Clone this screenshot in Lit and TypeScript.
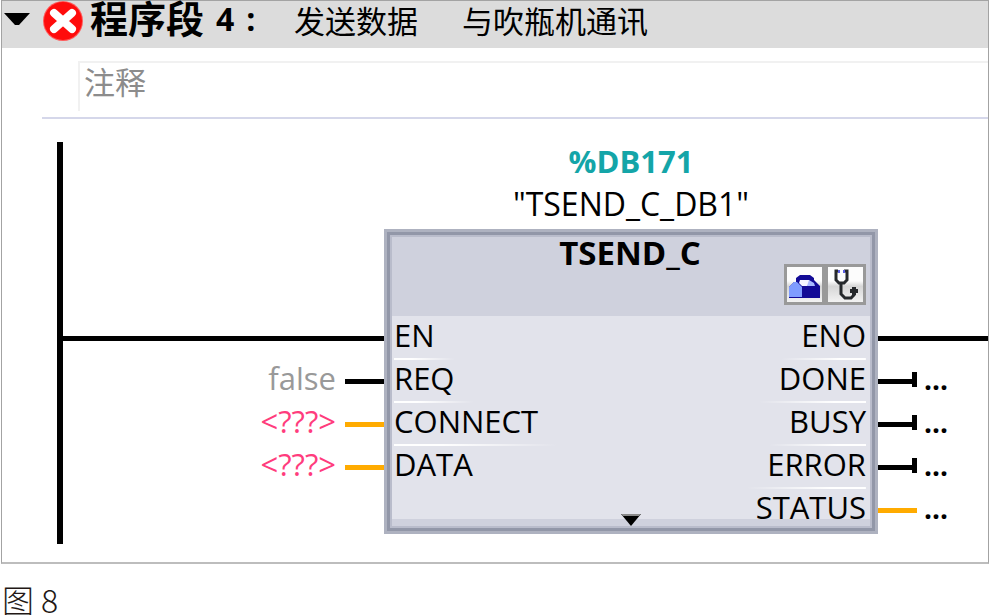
import { LitElement, html, css, svg } from "lit";
import { customElement, property } from "lit/decorators.js";

interface Operand {
  text: string;
  kind: "value" | "missing" | "none";
  wire: "bool" | "data";
}

interface Output {
  name: string;
  wire: "rail" | "bool" | "data";
}

const operands: Operand[] = [
  { text: "false", kind: "value", wire: "bool" },
  { text: "<???>", kind: "missing", wire: "data" },
  { text: "<???>", kind: "missing", wire: "data" },
];

const inputs = ["EN", "REQ", "CONNECT", "DATA"];

const outputs: Output[] = [
  { name: "ENO", wire: "rail" },
  { name: "DONE", wire: "bool" },
  { name: "BUSY", wire: "bool" },
  { name: "ERROR", wire: "bool" },
  { name: "STATUS", wire: "data" },
];

const toolboxIcon = svg`
  <svg viewBox="0 0 35 35" width="35" height="35" aria-hidden="true">
    <path d="M2 20 L7 15 H9 V11 L13 8 H23 L27 11 V13 L33 19 V31 H2 Z" fill="#120a96"/>
    <path d="M2 20 L7 15 H10 L15 20 V30 H2 Z" fill="#7f9cff"/>
    <path d="M13 13 H22 L24 17 L20 19 H15 L12 16 Z" fill="#f4f5ff"/>
    <path d="M22 13 L27 16 L28 19 H20 Z" fill="#a9b9ff"/>
  </svg>`;

const stethoscopeIcon = svg`
  <svg viewBox="0 0 35 35" width="35" height="35" aria-hidden="true" fill="none" stroke="#25282b" stroke-width="3">
    <path d="M10 4 H8 V13 L11 16 H16 L19 13 V4 H16"/>
    <path d="M13 16 V27 L17 31 H23 L26 28 V21"/>
    <path d="M22 24 H30" stroke-width="4"/>
    <path d="M26 20 V28" stroke-width="4"/>
    <path d="M11 3 V6 M16 3 V6" stroke="#5a5fe0" stroke-width="2"/>
  </svg>`;

const errorIcon = svg`
  <svg viewBox="0 0 42 42" width="42" height="42" role="img" aria-label="错误">
    <circle cx="21" cy="20" r="20" fill="#ff5a5a"/>
    <circle cx="21" cy="20" r="19" fill="#ff0c0c"/>
    <path d="M12 12 L30 28 M30 12 L12 28" stroke="#ffffff" stroke-width="8" stroke-linecap="round"/>
  </svg>`;

@customElement("function-block")
export class FunctionBlock extends LitElement {
  @property() name = "";

  static styles = css`
    :host {
      display: block;
      position: relative;
      box-sizing: border-box;
      padding: 0 12px 2px 10px;
      background: linear-gradient(
        #cfd1dd 0 87px,
        #e2e3eb 87px calc(100% - 15px),
        #cfd1dd calc(100% - 15px)
      );
      box-shadow:
        inset 0 0 0 3px #aeb2c0,
        inset 0 0 0 6px #9297a8,
        inset 0 0 0 8px #b9bccb;
    }
    .head {
      height: 88px;
      box-sizing: border-box;
      padding-top: 6px;
      text-align: center;
    }
    .title {
      margin: 0;
      font-size: 33px;
      font-weight: 700;
    }
    .tools {
      position: absolute;
      top: 35px;
      right: 12px;
      display: flex;
    }
    .tool {
      display: block;
      width: 41px;
      height: 41px;
      padding: 0;
      border: 3px solid #999999;
      background: linear-gradient(#fcfcfc 0 40%, #d6d6d6 55%, #f2f2f2);
    }
    .tool svg {
      display: block;
    }
    .ports {
      display: flex;
      justify-content: space-between;
    }
    .list {
      display: flex;
      flex-direction: column;
      margin: 0;
      padding: 0;
      list-style: none;
      align-items: flex-start;
    }
    .list.out {
      align-items: flex-end;
    }
    .port {
      height: 43px;
      box-sizing: border-box;
      padding-right: 20px;
      background: linear-gradient(to right, #ffffff 30%, #ffffff00) bottom / 100% 2px no-repeat;
    }
    .out .port {
      padding: 0 0 0 20px;
      background-image: linear-gradient(to left, #ffffff 30%, #ffffff00);
    }
    .port:last-child {
      background: none;
    }
    .more {
      position: absolute;
      bottom: 8px;
      left: 50%;
      width: 20px;
      height: 12px;
      margin-left: -10px;
      padding: 0;
      border: 0;
      background: none;
    }
    .more svg {
      display: block;
    }
  `;

  render() {
    return html`
      <div class="head"><h3 class="title">${this.name}</h3></div>
      <div class="tools">
        <button class="tool" aria-label="组态">${toolboxIcon}</button>
        <button class="tool" aria-label="诊断">${stethoscopeIcon}</button>
      </div>
      <div class="ports">
        <ul class="list">
          ${inputs.map((name) => html`<li class="port">${name}</li>`)}
        </ul>
        <ul class="list out">
          ${outputs.map((o) => html`<li class="port">${o.name}</li>`)}
        </ul>
      </div>
      <button class="more" aria-label="展开">
        <svg viewBox="0 0 20 12" width="20" height="12" aria-hidden="true">
          <path d="M0 0 H20 L10 12 Z" fill="#000000"/>
          <path d="M0 0 H20 L18 2 H2 Z" fill="#8a8a8a"/>
        </svg>
      </button>
    `;
  }
}

@customElement("app-root")
export class AppRoot extends LitElement {
  static styles = css`
    :host {
      display: block;
      background: #ffffff;
      color: #000000;
      font-family: "Open Sans", "Noto Sans", "Noto Sans CJK SC", sans-serif;
      font-size: 31px;
    }
    .segment {
      box-sizing: border-box;
      margin: 0 0 0 1px;
      padding-bottom: 18px;
      border: 1px solid #a3a3a3;
      border-bottom-width: 2px;
      border-bottom-color: #bdbdbd;
    }
    .bar {
      display: flex;
      align-items: flex-start;
      height: 47px;
      background: #dcdcdc;
      white-space: nowrap;
    }
    .fold {
      flex: none;
      width: 26px;
      height: 12px;
      margin: 12px 12px 0 2px;
      padding: 0;
      border: 0;
      background: none;
    }
    .fold svg,
    .bar > svg {
      display: block;
      flex: none;
    }
    .name {
      display: flex;
      flex: none;
      gap: 12px;
      width: 204px;
      margin: 0 0 0 6px;
      font-family: "Open Sans", "Noto Sans CJK SC", sans-serif;
      font-size: 38px;
      line-height: 35px;
      font-weight: 700;
    }
    .number {
      font-size: 32px;
    }
    .topic {
      display: flex;
      gap: 44px;
      margin: 0;
      font-family: "Noto Sans CJK SC", sans-serif;
      line-height: 38px;
    }
    .note {
      margin: 13px 0 0 40px;
      padding: 0 0 6px 36px;
      border-bottom: 2px solid #d5d7ea;
    }
    .comment {
      display: block;
      box-sizing: border-box;
      width: 100%;
      height: 50px;
      padding: 0 0 14px 4px;
      border: 0 solid #f1f1f1;
      border-width: 2px 0 0 2px;
      border-radius: 0;
      outline: 0;
      background: #ffffff;
      font-family: "Noto Sans CJK SC", sans-serif;
      font-size: 31px;
      line-height: 34px;
    }
    .comment::placeholder {
      color: #8c8c8c;
      opacity: 1;
    }
    .network {
      display: grid;
      grid-template-columns: 321fr 494fr 110fr;
      align-items: start;
      margin: 23px 0 0 55px;
      border-left: 6px solid #000000;
      padding-bottom: 10px;
      line-height: 36px;
    }
    .side {
      display: flex;
      flex-direction: column;
      padding-top: 175px;
    }
    .line {
      display: flex;
      align-items: flex-start;
      gap: 9px;
      height: 43px;
    }
    .side.left .line {
      justify-content: flex-end;
    }
    .side.right .line {
      gap: 7px;
    }
    .wire {
      flex: none;
      box-sizing: border-box;
      width: 39px;
      height: 5px;
      margin-top: 19px;
      background: #000000;
    }
    .wire.rail {
      flex: 1;
    }
    .wire.data {
      background: #ffab00;
    }
    .pin {
      flex: none;
      width: 5px;
      height: 15px;
      margin: 12px 0 0 -12px;
      background: #000000;
    }
    .value {
      color: #999999;
    }
    .missing {
      color: #ff3c7d;
    }
    .dots {
      font-weight: 700;
      font-size: 28px;
      line-height: 38px;
    }
    .center {
      display: flex;
      flex-direction: column;
      text-align: center;
    }
    .address,
    .instance {
      box-sizing: border-box;
      height: 43px;
    }
    .address {
      height: 44px;
      padding-top: 1px;
      color: #14a5a8;
      font-weight: 700;
    }
    .instance {
      font-size: 32px;
    }
    .caption {
      padding: 19px 0 0 2px;
      font-family: "Noto Sans CJK SC", sans-serif;
      font-size: 32px;
      line-height: 32px;
      font-weight: 300;
      color: #231815;
    }
    .figure {
      margin: 0;
    }
  `;

  render() {
    return html`
      <figure class="figure">
        <section class="segment">
          <header class="bar">
            <button class="fold" aria-label="折叠程序段">
              <svg viewBox="0 0 26 12" width="26" height="12" aria-hidden="true">
                <path d="M0 0 H26 L15 12 H11 Z" fill="#000000"/>
              </svg>
            </button>
            ${errorIcon}
            <h2 class="name">
              <span>程序段</span><span class="number">4</span><span class="number">:</span>
            </h2>
            <p class="topic"><span>发送数据</span><span>与吹瓶机通讯</span></p>
          </header>
          <div class="note">
            <input class="comment" type="text" placeholder="注释" aria-label="注释" />
          </div>
          <div class="network">
            <div class="side left">
              <div class="line"><span class="wire rail"></span></div>
              ${operands.map(
                (o) => html`<div class="line">
                  <span class=${o.kind}>${o.text}</span><span class="wire ${o.wire}"></span>
                </div>`
              )}
            </div>
            <div class="center">
              <div class="address">%DB171</div>
              <div class="instance">"TSEND_C_DB1"</div>
              <function-block name="TSEND_C"></function-block>
            </div>
            <div class="side right">
              ${outputs.map(
                (o) => html`<div class="line">
                  <span class="wire ${o.wire}"></span>
                  ${o.wire === "bool" ? html`<span class="pin"></span>` : ""}
                  ${o.wire === "rail" ? "" : html`<span class="dots">...</span>`}
                </div>`
              )}
            </div>
          </div>
        </section>
        <figcaption class="caption">图 8</figcaption>
      </figure>
    `;
  }
}
